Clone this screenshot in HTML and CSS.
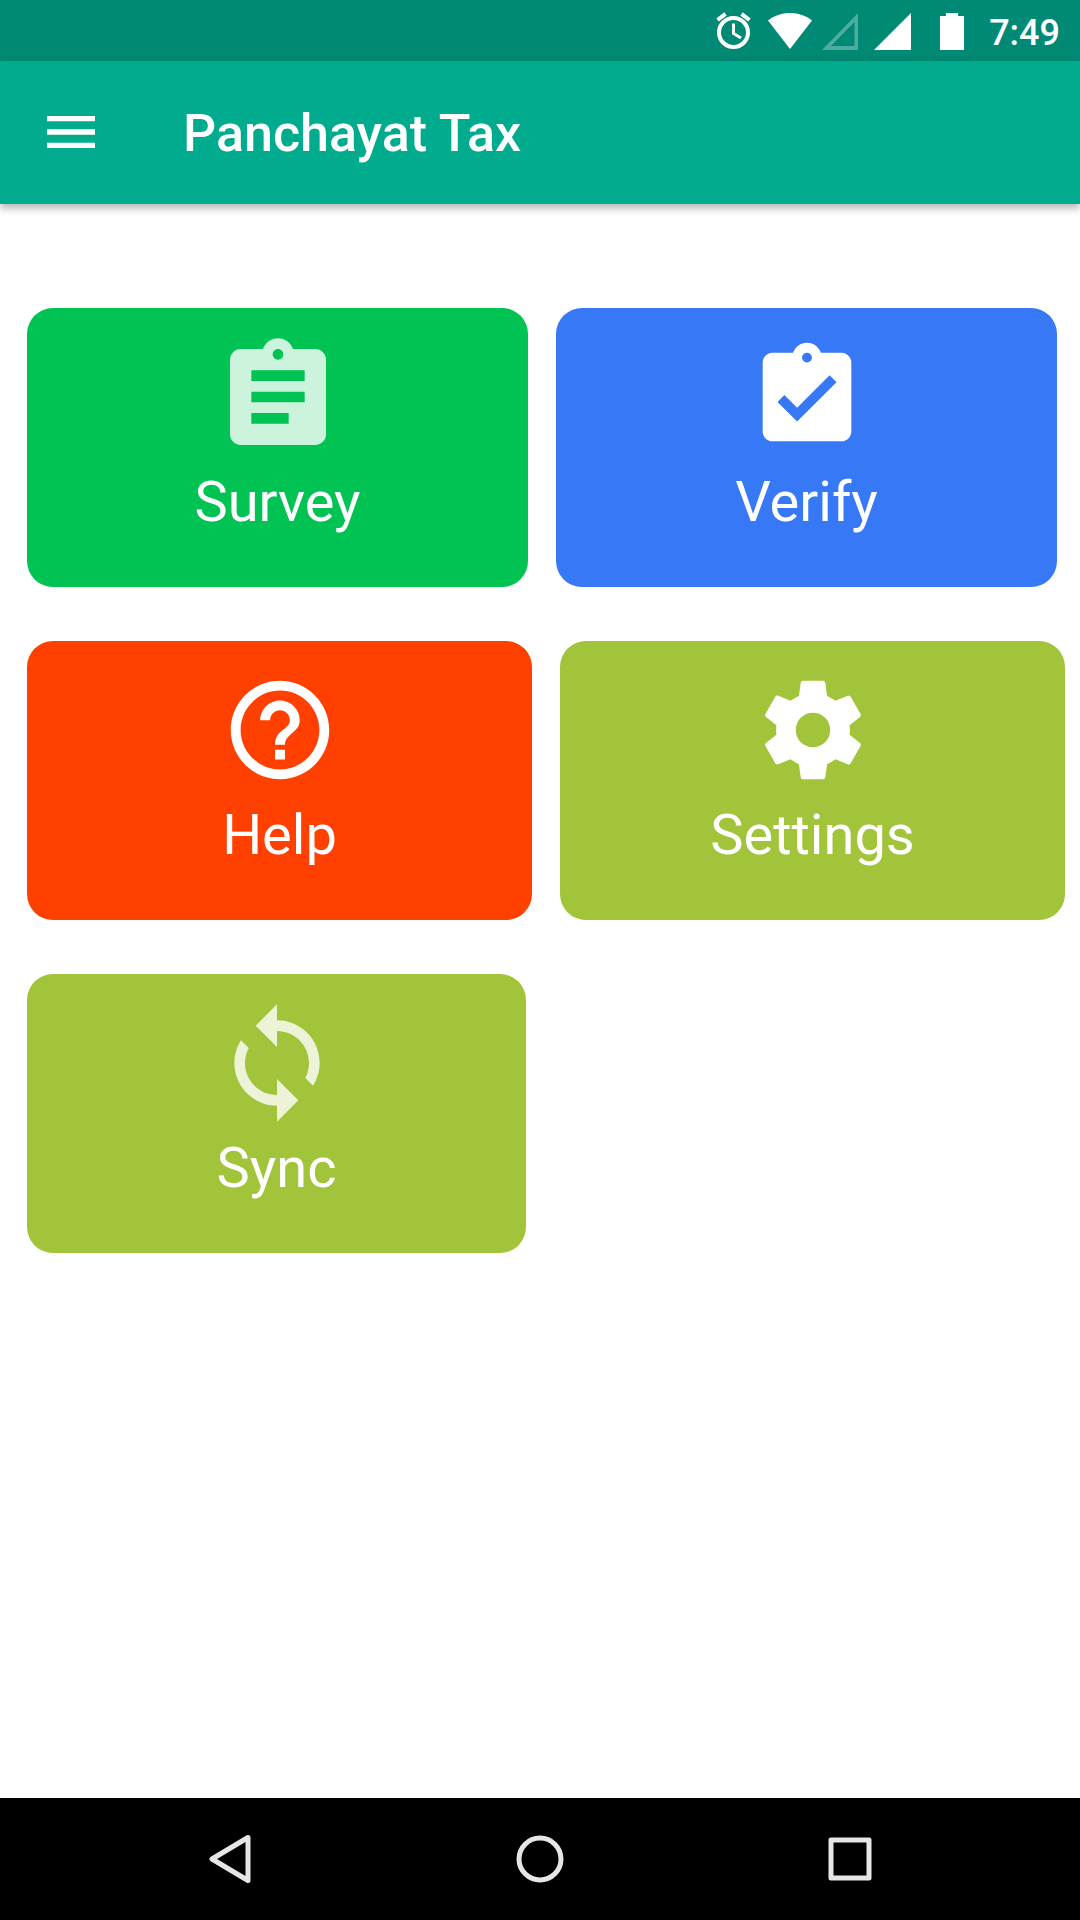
FILE: index.html
```html
<!DOCTYPE html>
<html lang="en">
<head>
    <meta charset="UTF-8">
    <meta name="viewport" content="width=device-width, initial-scale=1.0">
    <title>Panchayat Tax</title>
    <link rel="stylesheet" href="styles.css">
</head>
<body>
    <div class="status-bar">
        <svg width="42" height="38" viewBox="0 0 42 38" fill="none" stroke="#fff">
            <circle cx="17.5" cy="20.5" r="14.5" stroke-width="4"/>
            <path d="M17.5 11.5v10l7.5 4.5" stroke-width="3"/>
            <path d="M1.5 8L9.5 1.8M33.5 8L25.5 1.8" stroke-width="4"/>
        </svg>
        <svg width="44" height="38" viewBox="0 0 44 38" fill="#fff">
            <path d="M0 8.5C6 3.500 14 1 22 1s16 2.500 22 7.500L22 37z"/>
        </svg>
        <svg width="36" height="38" viewBox="0 0 36 38" fill="#fff" fill-opacity="0.3">
            <path fill-rule="evenodd" d="M36 1v37H0zM32.500 10v24H9z"/>
        </svg>
        <svg width="43" height="38" viewBox="0 0 43 38" fill="#fff">
            <path d="M43 1v37H6z"/>
        </svg>
        <svg width="58" height="38" viewBox="0 0 58 38" fill="#fff">
            <path d="M19 4h6V1h12v3h6v34H19z"/>
        </svg>
        <span class="time">7:49</span>
    </div>

    <header class="app-bar">
        <button class="menu-button" type="button" aria-label="Open menu">
            <svg width="64" height="64" viewBox="0 0 24 24" fill="#fff">
                <path d="M3 18h18v-2H3v2zm0-5h18v-2H3v2zm0-7v2h18V6H3z"/>
            </svg>
        </button>
        <h1>Panchayat Tax</h1>
    </header>

    <main>
        <div class="row row-one">
            <button class="card survey" type="button">
                <svg class="faded" viewBox="0 0 24 24">
                    <path d="M19 3h-4.180C14.400 1.840 13.300 1 12 1c-1.300 0-2.400.84-2.820 2H5c-1.100 0-2 .9-2 2v14c0 1.100.9 2 2 2h14c1.100 0 2-.9 2-2V5c0-1.100-.9-2-2-2zm-7 0c.55 0 1 .45 1 1s-.45 1-1 1-1-.45-1-1 .45-1 1-1zm2 14H7v-2h7v2zm3-4H7v-2h10v2zm0-4H7V7h10v2z"/>
                </svg>
                <span>Survey</span>
            </button>
            <button class="card verify" type="button">
                <svg viewBox="-1 -1 26 26">
                    <path d="M19 3h-4.180C14.400 1.840 13.300 1 12 1c-1.300 0-2.400.84-2.820 2H5c-1.100 0-2 .9-2 2v14c0 1.100.9 2 2 2h14c1.100 0 2-.9 2-2V5c0-1.100-.9-2-2-2zm-7 0c.55 0 1 .45 1 1s-.45 1-1 1-1-.45-1-1 .45-1 1-1zm-2 14l-4-4 1.410-1.410L10 14.170l6.590-6.590L18 9l-8 8z"/>
                </svg>
                <span>Verify</span>
            </button>
        </div>

        <div class="row row-two">
            <button class="card help" type="button">
                <svg viewBox="-1 -1 26 26">
                    <path d="M11 18h2v-2h-2v2zm1-16C6.480 2 2 6.480 2 12s4.480 10 10 10 10-4.480 10-10S17.520 2 12 2zm0 18c-4.410 0-8-3.590-8-8s3.590-8 8-8 8 3.590 8 8-3.590 8-8 8zm0-14c-2.210 0-4 1.790-4 4h2c0-1.100.9-2 2-2s2 .9 2 2c0 2-3 1.750-3 5h2c0-2.250 3-2.500 3-5 0-2.210-1.790-4-4-4z"/>
                </svg>
                <span>Help</span>
            </button>
            <button class="card settings" type="button">
                <svg viewBox="-1 -1 26 26">
                    <path d="M19.430 12.980c.04-.32.07-.64.07-.98s-.03-.66-.07-.98l2.110-1.650c.19-.15.24-.42.12-.64l-2-3.460c-.12-.22-.39-.3-.61-.22l-2.490 1c-.52-.4-1.080-.73-1.690-.98l-.38-2.650C14.460 2.180 14.250 2 14 2h-4c-.25 0-.46.18-.49.42l-.38 2.650c-.61.25-1.170.59-1.690.98l-2.490-1c-.23-.09-.49 0-.61.22l-2 3.460c-.13.22-.07.49.12.64l2.110 1.650c-.04.32-.07.65-.07.98s.03.66.07.98l-2.110 1.650c-.19.15-.24.42-.12.64l2 3.460c.12.22.39.3.61.22l2.490-1c.52.4 1.080.73 1.690.98l.38 2.650c.03.24.24.42.49.42h4c.25 0 .46-.18.49-.42l.38-2.650c.61-.25 1.170-.59 1.690-.98l2.490 1c.23.09.49 0 .61-.22l2-3.460c.12-.22.07-.49-.12-.64l-2.110-1.650zM12 15.500c-1.930 0-3.500-1.570-3.500-3.500s1.570-3.500 3.500-3.500 3.500 1.570 3.500 3.500-1.570 3.500-3.500 3.500z"/>
                </svg>
                <span>Settings</span>
            </button>
        </div>

        <div class="row row-three">
            <button class="card sync" type="button">
                <svg class="faded" viewBox="0 0 24 24">
                    <path d="M12 4V1L8 5l4 4V6c3.310 0 6 2.690 6 6 0 1.010-.25 1.970-.7 2.800l1.460 1.460C19.540 15.030 20 13.570 20 12c0-4.420-3.580-8-8-8zm0 14c-3.310 0-6-2.690-6-6 0-1.010.25-1.970.7-2.800L5.240 7.740C4.460 8.970 4 10.430 4 12c0 4.420 3.580 8 8 8v3l4-4-4-4v3z"/>
                </svg>
                <span>Sync</span>
            </button>
        </div>
    </main>

    <nav class="nav-bar">
        <button type="button" aria-label="Back">
            <svg width="48" height="48" viewBox="0 0 48 48">
                <path d="M42 2.500v43L6 24z"/>
            </svg>
        </button>
        <button type="button" aria-label="Home">
            <svg width="48" height="48" viewBox="0 0 48 48">
                <circle cx="24" cy="24" r="21"/>
            </svg>
        </button>
        <button type="button" aria-label="Recent apps">
            <svg width="48" height="48" viewBox="0 0 48 48">
                <rect x="5" y="5" width="38" height="38"/>
            </svg>
        </button>
    </nav>
</body>
</html>
```
FILE: styles.css
```css
* {
    box-sizing: border-box;
}

body {
    font-family: Roboto, sans-serif;
    background-color: white;
    color: white;
    margin: 0;
    min-height: 100vh;
    display: flex;
    flex-direction: column;
}

button {
    border: none;
    padding: 0;
    background: none;
    color: inherit;
    font-family: inherit;
    cursor: pointer;
}

svg {
    display: block;
}

.status-bar {
    display: flex;
    justify-content: flex-end;
    align-items: center;
    gap: 10px;
    height: 61px;
    padding-right: 20px;
    background-color: #008975;
}

.time {
    font-size: 36px;
    line-height: 40px;
    font-weight: 500;
    padding-top: 4px;
}

.app-bar {
    display: flex;
    align-items: center;
    gap: 80px;
    height: 143px;
    padding: 0 39px 2px;
    background-color: #00ab8e;
    box-shadow: 0 4px 8px rgba(0, 0, 0, 0.3);
}

h1 {
    margin: 0;
    padding-top: 4px;
    font-size: 52px;
    line-height: 60px;
    font-weight: 500;
}

main {
    flex: 1;
    display: flex;
    flex-direction: column;
    gap: 54px;
    padding: 104px 0 54px 27px;
}

.row {
    display: grid;
    grid-template-columns: 1fr 1fr;
    gap: 28px;
}

.row-one {
    padding-right: 23px;
}

.row-two {
    padding-right: 15px;
}

.row-three {
    padding-right: 27px;
}

.card {
    display: flex;
    flex-direction: column;
    align-items: center;
    gap: 8px;
    padding: 25px 0 52px;
    border-radius: 26px;
    font-size: 56px;
    line-height: 66px;
}

.card svg {
    width: 128px;
    height: 128px;
    fill: white;
}

.card .faded {
    opacity: 0.8;
}

.survey {
    background-color: #00c353;
}

.verify {
    background-color: #3778f7;
}

.help {
    background-color: #ff4000;
}

.settings,
.sync {
    background-color: #a2c43b;
}

.nav-bar {
    display: flex;
    height: 122px;
    padding: 0 75px;
    background-color: black;
}

.nav-bar button {
    flex: 1;
    display: flex;
    justify-content: center;
    align-items: center;
}

.nav-bar svg {
    fill: none;
    stroke: #e6e6e6;
    stroke-width: 5px;
    stroke-linejoin: round;
}
```
